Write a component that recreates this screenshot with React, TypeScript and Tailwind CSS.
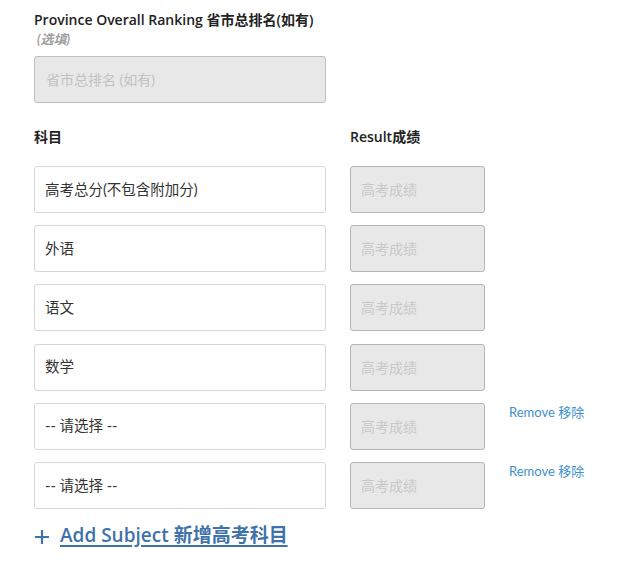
import React from "react";

const font = { fontFamily: "Lato, 'Noto Sans CJK SC', sans-serif" };
const head = { fontFamily: "'Open Sans', 'Noto Sans CJK SC', sans-serif" };

const rows = [
  { subject: "高考总分(不包含附加分)", removable: false },
  { subject: "外语", removable: false },
  { subject: "语文", removable: false },
  { subject: "数学", removable: false },
  { subject: "-- 请选择 --", removable: true },
  { subject: "-- 请选择 --", removable: true },
];

export default function App() {
  return (
    <div className="w-[638px] h-[579px] bg-white pl-[34px] pt-[10px]" style={font}>
      {/* Ranking */}
      <div className="text-[14px] font-semibold text-[#222] leading-[20px]" style={head}>
        Province Overall Ranking 省市总排名(如有)
      </div>
      <div className="text-[13px] italic font-bold text-[#a0a0a0] leading-[18px] pl-[3px]">(选填)</div>
      <div className="mt-[8px] w-[292px] h-[47px] rounded-[3px] border border-[#bdbdbd] bg-[#e8e8e8] flex items-center px-[11px] text-[14px] text-[#c2c2c2]">
        省市总排名 (如有)
      </div>

      {/* Headers */}
      <div className="flex mt-[24px] text-[14px] font-semibold text-[#222] leading-[20px]" style={head}>
        <div className="w-[316px]">科目</div>
        <div>Result成绩</div>
      </div>

      {/* Rows */}
      <div className="mt-[19px] flex flex-col gap-[12.2px]">
        {rows.map((r, i) => (
          <div key={i} className="flex items-start">
            <div className="w-[292px] h-[47px] rounded-[3px] border border-[#d6d6d6] bg-white flex items-center px-[10px] text-[14.5px] text-[#333]">
              {r.subject}
            </div>
            <div className="ml-[24px] w-[135px] h-[47px] rounded-[3px] border border-[#b5b5b5] bg-[#e8e8e8] flex items-center px-[10px] text-[14px] text-[#c8c8c8]">
              高考成绩
            </div>
            {r.removable && (
              <div className="ml-[24px] mt-[0px] text-[13px] text-[#3d8fcf] leading-[18px]">Remove 移除</div>
            )}
          </div>
        ))}
      </div>

      {/* Add subject */}
      <div className="mt-[12px] flex items-center gap-[10px] text-[#3f72a8]">
        <svg width="16" height="16" viewBox="0 0 16 16" className="mt-[3px]">
          <path d="M8 1v14M1 8h14" stroke="currentColor" strokeWidth="2.2" fill="none" />
        </svg>
        <span className="text-[19px] font-semibold underline underline-offset-[3px] decoration-[1.5px]" style={head}>
          Add Subject 新增高考科目
        </span>
      </div>
    </div>
  );
}
